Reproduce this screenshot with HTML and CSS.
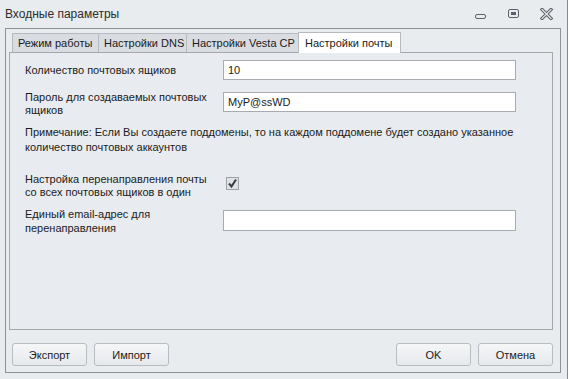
FILE: index.html
```html
<!DOCTYPE html>
<html lang="ru">
<head>
    <meta charset="UTF-8">
    <title>Входные параметры</title>
    <link rel="stylesheet" href="styles.css">
</head>
<body>
    <div class="window">
        <div class="titlebar">
            <span class="title">Входные параметры</span>
            <div class="controls">
                <svg class="ctl" width="14" height="12" viewBox="0 0 14 12">
                    <rect x="1.5" y="6.5" width="10" height="4" rx="1.5" fill="none" stroke="#5b6168"/>
                </svg>
                <svg class="ctl" width="14" height="12" viewBox="0 0 14 12">
                    <rect x="1.5" y="1.5" width="10" height="8" rx="1.5" fill="none" stroke="#5b6168"/>
                    <rect x="4" y="4" width="5" height="3" fill="#5b6168"/>
                </svg>
                <svg class="ctl" width="14" height="12" viewBox="0 0 14 12">
                    <path d="M2 1.5 L11 10.5 M11 1.5 L2 10.5" stroke="#5b6168" stroke-width="3.2" stroke-linecap="square"/>
                    <path d="M2 1.5 L11 10.5 M11 1.5 L2 10.5" stroke="#e9ecef" stroke-width="1.2" stroke-linecap="square"/>
                </svg>
            </div>
        </div>
        <div class="frame">
            <div class="tabs">
                <div class="tab">Режим работы</div>
                <div class="tab">Настройки DNS</div>
                <div class="tab">Настройки Vesta CP</div>
                <div class="tab active">Настройки почты</div>
            </div>
            <div class="panel">
                <div class="row row-first">
                    <label class="lbl">Количество почтовых ящиков</label>
                    <div class="field">10</div>
                </div>
                <div class="row row-pass">
                    <label class="lbl two">Пароль для создаваемых почтовых ящиков</label>
                    <div class="field">MyP@ssWD</div>
                </div>
                <p class="note">Примечание: Если Вы создаете поддомены, то на каждом поддомене будет создано указанное количество почтовых аккаунтов</p>
                <div class="row row-check">
                    <label class="lbl two">Настройка перенаправления почты со всех почтовых ящиков в один</label>
                    <span class="check">
                        <svg width="11" height="11" viewBox="0 0 11 11">
                            <path d="M2 5.5 L4.5 8.5 L9 1.5" fill="none" stroke="#3a3d40" stroke-width="2"/>
                        </svg>
                    </span>
                </div>
                <div class="row row-mail">
                    <label class="lbl two">Единый email-адрес для перенаправления</label>
                    <div class="field"></div>
                </div>
            </div>
            <div class="buttons">
                <button class="btn">Экспорт</button>
                <button class="btn">Импорт</button>
                <span class="spacer"></span>
                <button class="btn">OK</button>
                <button class="btn">Отмена</button>
            </div>
        </div>
    </div>
</body>
</html>
```

FILE: styles.css
```css
body {
    margin: 0;
    font-family: "Liberation Sans", Arial, sans-serif;
    font-size: 11px;
    color: #1b1b1b;
    background: #e9ecef;
}

.window {
    width: 567px;
    height: 379px;
    border-right: 1px solid #85898d;
    background: #e9ecef;
}

.titlebar {
    display: flex;
    align-items: center;
    height: 28px;
    padding-left: 5px;
}

.title {
    flex: 1;
    font-size: 12px;
    color: #2c2c2c;
}

.controls {
    display: flex;
    gap: 19px;
    padding-right: 13px;
}

.frame {
    margin: 0 6px 0 5px;
    height: 341px;
    border: 1px solid #8e9296;
    padding: 2px 7px 0 3px;
}

.tabs {
    display: flex;
    height: 21px;
    padding-left: 3px;
    align-items: flex-end;
}

.tab {
    box-sizing: border-box;
    height: 19px;
    line-height: 18px;
    padding-left: 5px;
    white-space: nowrap;
    background: #d9dce1;
    border: 1px solid #b6babe;
    border-bottom: none;
    margin-right: -1px;
}

.tab:nth-child(1) { width: 87px; }
.tab:nth-child(2) { width: 89px; }
.tab:nth-child(3) { width: 113px; }

.tab.active {
    height: 21px;
    width: 103px;
    padding-left: 6px;
    line-height: 20px;
    background: #ffffff;
    position: relative;
    z-index: 1;
    margin-bottom: -1px;
}

.panel {
    height: 276px;
    border: 1px solid #a4a8ac;
    background: #e8ebef;
    padding: 0 0 0 15px;
}

.row {
    display: flex;
    align-items: flex-start;
}

.lbl {
    width: 198px;
    line-height: 13px;
}

.lbl.two {
    width: 184px;
    margin-right: 14px;
}

.field {
    width: 287px;
    height: 18px;
    line-height: 18px;
    padding-left: 4px;
    border: 1px solid #a8abaf;
    background: #fff;
}

.row-first {
    margin-top: 7px;
}

.row-first .lbl {
    padding-top: 4px;
}

.row-pass {
    margin-top: 12px;
}

.row-pass .lbl {
    margin-top: -1px;
}

.note {
    margin: 8px 0 0;
    width: 500px;
    line-height: 15px;
}

.row-check {
    margin-top: 18px;
}

.check {
    display: flex;
    align-items: center;
    justify-content: center;
    width: 11px;
    height: 11px;
    margin: 4px 0 0 3px;
    border: 1px solid #9ea1a5;
    background: #dfe2e6;
}

.row-mail {
    margin-top: 11px;
}

.row-mail .lbl {
    line-height: 14px;
    margin-top: -3px;
}

.row-mail .field {
    height: 19px;
}

.buttons {
    display: flex;
    gap: 7px;
    margin-top: 13px;
    padding-left: 3px;
}

.spacer {
    flex: 1;
}

.btn {
    width: 75px;
    height: 23px;
    font-family: inherit;
    font-size: 11px;
    color: #1b1b1b;
    border: 1px solid #b8bbbf;
    border-radius: 3px;
    background: linear-gradient(#f5f6f8, #e6e9ec);
    padding: 0;
}
```
